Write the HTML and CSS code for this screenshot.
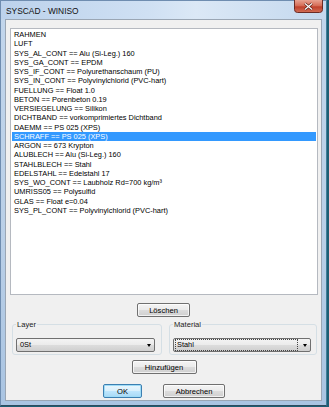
FILE: index.html
```html
<!DOCTYPE html>
<html lang="de">
<head>
    <meta charset="UTF-8">
    <title>SYSCAD - WINISO</title>
    <link rel="stylesheet" href="styles.css">
</head>
<body>
    <div class="window">
        <div class="titlebar">
            <span class="title">SYSCAD - WINISO</span>
            <svg class="win-close" width="29" height="13" viewBox="0 0 29 13">
                <defs>
                    <linearGradient id="closeGrad" x1="0" y1="0" x2="0" y2="1">
                        <stop offset="0" stop-color="#e8a292"/>
                        <stop offset="0.45" stop-color="#d66d57"/>
                        <stop offset="0.55" stop-color="#c0402b"/>
                        <stop offset="1" stop-color="#d27058"/>
                    </linearGradient>
                </defs>
                <path d="M0.5 0 V9.5 Q0.5 12.5 3.5 12.5 H25.5 Q28.5 12.5 28.5 9.5 V0" fill="url(#closeGrad)" stroke="#6b2b24"/>
                <path d="M11 3.5 L18 9.5 M18 3.5 L11 9.5" stroke="#5a2019" stroke-width="2.6"/>
                <path d="M11 3.5 L18 9.5 M18 3.5 L11 9.5" stroke="#ffffff" stroke-width="1.2"/>
            </svg>
        </div>

        <div class="client">
            <!-- Material list -->
            <ul class="listbox">
                <li>RAHMEN</li>
                <li>LUFT</li>
                <li>SYS_AL_CONT == Alu (Si-Leg.) 160</li>
                <li>SYS_GA_CONT == EPDM</li>
                <li>SYS_IF_CONT == Polyurethanschaum (PU)</li>
                <li>SYS_IN_CONT == Polyvinylchlorid (PVC-hart)</li>
                <li>FUELLUNG == Float 1.0</li>
                <li>BETON == Porenbeton 0.19</li>
                <li>VERSIEGELUNG == Silikon</li>
                <li>DICHTBAND == vorkomprimiertes Dichtband</li>
                <li>DAEMM == PS 025 (XPS)</li>
                <li class="selected">SCHRAFF == PS 025 (XPS)</li>
                <li>ARGON == 673 Krypton</li>
                <li>ALUBLECH == Alu (Si-Leg.) 160</li>
                <li>STAHLBLECH == Stahl</li>
                <li>EDELSTAHL == Edelstahl 17</li>
                <li>SYS_WO_CONT == Laubholz Rd=700 kg/m³</li>
                <li>UMRISS05 == Polysulfid</li>
                <li>GLAS == Float e=0.04</li>
                <li>SYS_PL_CONT == Polyvinylchlorid (PVC-hart)</li>
            </ul>

            <div class="button-row row-delete">
                <button class="btn btn-delete">Löschen</button>
            </div>

            <div class="groups">
                <div class="group group-layer">
                    <span class="group-label">Layer</span>
                    <div class="combo">
                        <span class="combo-text">0St</span>
                        <span class="combo-arrow"></span>
                    </div>
                </div>
                <div class="group group-material">
                    <span class="group-label">Material</span>
                    <div class="combo">
                        <span class="combo-text focused">Stahl</span>
                        <span class="combo-arrow"></span>
                    </div>
                </div>
            </div>

            <div class="button-row row-add">
                <button class="btn btn-add">Hinzufügen</button>
            </div>

            <div class="button-row row-actions">
                <button class="btn btn-ok">OK</button>
                <button class="btn btn-cancel">Abbrechen</button>
            </div>
        </div>
    </div>
</body>
</html>
```

FILE: styles.css
```css
/* Global */
body {
    margin: 0;
    padding: 0;
    width: 329px;
    height: 407px;
    overflow: hidden;
    background-color: #1d5e74;
    font-family: "Liberation Sans", Arial, sans-serif;
    font-size: 8px;
    color: #000;
}

/* Window frame */
.window {
    width: 327px;
    height: 406px;
    box-sizing: border-box;
    background: linear-gradient(to bottom, #c2d6ec, #b9cfe7 60%, #a9c4e2);
    border: 1px solid #6f8db0;
    border-right-color: #3f7f9a;
    border-bottom-color: #2c4c5e;
    display: flex;
    flex-direction: column;
}

/* Title bar */
.titlebar {
    height: 18px;
    display: flex;
    align-items: flex-start;
    justify-content: space-between;
    background: linear-gradient(to right, #bcd2ec 0%, #cfe0f3 45%, #dbe8f6 60%, #c4d8ee 100%);
}

.title {
    margin: 5px 0 0 5px;
    font-size: 8.4px;
    color: #111;
}

.win-close {
    display: block;
    margin: -1px 3px 0 0;
}

/* Client area */
.client {
    margin: 0 4px 4px 4px;
    flex-grow: 1;
    background-color: #f0f0f0;
    border: 1px solid #9aa6b4;
    display: flex;
    flex-direction: column;
}

/* List box */
.listbox {
    list-style: none;
    margin: 8px 3px 0 4px;
    padding: 1px 1px 0 1px;
    height: 264px;
    background: #fff;
    border: 1px solid #b5b9c0;
    font-size: 7.4px;
    line-height: 9.25px;
    overflow: hidden;
}

.listbox li {
    padding-left: 2px;
    white-space: nowrap;
    color: #000;
}

.listbox li.selected {
    background-color: #3399ff;
    color: #fff;
}

/* Buttons */
.button-row {
    display: flex;
    justify-content: center;
}

.row-delete {
    margin-top: 8px;
}

.row-add {
    margin-top: 5px;
    padding-left: 1px;
}

.row-actions {
    margin-top: 10px;
    gap: 21px;
    padding-left: 1px;
}

.btn {
    height: 14px;
    padding: 0;
    font-family: "Liberation Sans", Arial, sans-serif;
    font-size: 7.6px;
    color: #000;
    border: 1px solid #707070;
    border-radius: 2px;
    background: linear-gradient(to bottom, #f4f4f4 0%, #ebebeb 48%, #dcdcdc 52%, #cfcfcf 100%);
    box-shadow: inset 0 0 0 1px rgba(255, 255, 255, 0.7);
}

.btn-delete {
    width: 53px;
}

.btn-add {
    width: 65px;
}

.btn-ok {
    width: 39px;
    border-color: #3c7fb1;
    box-shadow: inset 0 0 0 1px #9fdcf7;
    background: linear-gradient(to bottom, #eaf6fd 0%, #d9f0fc 48%, #bee6fd 52%, #a7d9f5 100%);
}

.btn-cancel {
    width: 62px;
}

/* Group boxes */
.groups {
    display: flex;
    gap: 7px;
    margin: 7px 4px 0 6px;
}

.group {
    position: relative;
    height: 31px;
    box-sizing: border-box;
    border: 1px solid #d5dfe5;
    border-radius: 3px;
    padding: 13px 0 0 3px;
}

.group-layer {
    width: 150px;
}

.group-material {
    width: 148px;
}

.group-label {
    position: absolute;
    top: -5px;
    left: 3px;
    padding: 0 1px;
    background-color: #f0f0f0;
    font-size: 7.6px;
    color: #222;
}

/* Combo boxes */
.combo {
    position: relative;
    height: 14px;
    box-sizing: border-box;
    border: 1px solid #707070;
    border-radius: 2px;
    background: linear-gradient(to bottom, #f4f4f4 0%, #ebebeb 48%, #dcdcdc 52%, #cfcfcf 100%);
    display: flex;
    align-items: center;
}

.group-layer .combo {
    width: 139px;
}

.group-material .combo {
    width: 138px;
}

.combo-text {
    margin-left: 1px;
    padding-left: 2px;
    font-size: 7.4px;
    line-height: 10px;
    box-sizing: border-box;
}

.combo-text.focused {
    width: 123px;
    border: 1px dotted #444;
    padding-left: 1px;
}

.combo-arrow {
    position: absolute;
    right: 3px;
    top: 5px;
    width: 0;
    height: 0;
    border-left: 2.5px solid transparent;
    border-right: 2.5px solid transparent;
    border-top: 3px solid #000;
}
```
